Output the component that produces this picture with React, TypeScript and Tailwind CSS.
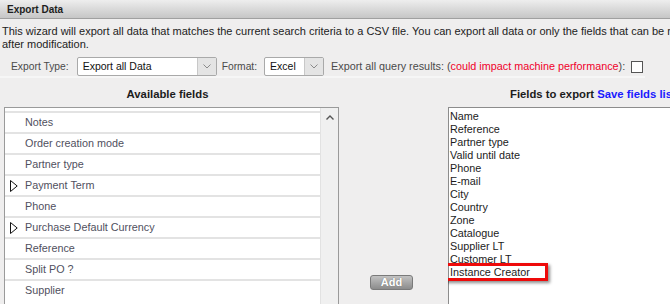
import React from "react";

function Chevron() {
  return (
    <svg width="8" height="5" viewBox="0 0 8 5">
      <path d="M0.5 0.5 L4 4 L7.5 0.5" fill="none" stroke="#8a8a8a" strokeWidth="1" />
    </svg>
  );
}

function Select({ value, width }: { value: string; width: string }) {
  return (
    <div className={`${width} h-[19px] flex border border-[#a9a9a9] rounded-[2px] bg-white overflow-hidden`}>
      <div className="flex-1 flex items-center pl-[5px] text-[10.5px] text-[#111]">{value}</div>
      <div className="w-[19px] flex items-center justify-center bg-[#e4e4e4] border-l border-[#c8c8c8]">
        <Chevron />
      </div>
    </div>
  );
}

function Triangle() {
  return (
    <svg width="8" height="12" viewBox="0 0 8 12">
      <polygon points="0.5,0.5 7.2,6 0.5,11.5" fill="white" stroke="#111" strokeWidth="1" />
    </svg>
  );
}

const available: { label: string; arrow?: boolean }[] = [
  { label: "Notes" },
  { label: "Order creation mode" },
  { label: "Partner type" },
  { label: "Payment Term", arrow: true },
  { label: "Phone" },
  { label: "Purchase Default Currency", arrow: true },
  { label: "Reference" },
  { label: "Split PO ?" },
  { label: "Supplier" },
];

const exportFields = [
  "Name",
  "Reference",
  "Partner type",
  "Valid until date",
  "Phone",
  "E-mail",
  "City",
  "Country",
  "Zone",
  "Catalogue",
  "Supplier LT",
  "Customer LT",
  "Instance Creator",
];

export default function App() {
  return (
    <div className="w-[670px] h-[304px] overflow-hidden bg-[#efeeee] font-['Liberation_Sans',Arial,sans-serif]">
      <div className="h-[19px] flex items-center pl-[7px] bg-gradient-to-b from-[#eeeeee] to-[#c6c6c6] border-b border-[#a0a0a0] text-[10px] font-bold text-[#1e1e1e]">
        Export Data
      </div>
      <div className="mt-[6px] pl-[2px] text-[11px] leading-[13px] text-[#222] whitespace-nowrap overflow-hidden">
        <div>
          This wizard will export all data that matches the current search criteria to a CSV file. You can export all data or only the fields that can be reimported
        </div>
        <div>after modification.</div>
      </div>
      <div className="mt-[6px] w-[645px] h-[21px] border-b-2 border-[#f6f6f6] flex items-start pl-[11px] text-[10.3px] text-[#4a4a4a] whitespace-nowrap">
        <div className="h-[19px] flex items-center">Export Type:</div>
        <div className="ml-[8px]">
          <Select value="Export all Data" width="w-[140px]" />
        </div>
        <div className="ml-[5px] h-[19px] flex items-center">Format:</div>
        <div className="ml-[7px]">
          <Select value="Excel" width="w-[60px]" />
        </div>
        <div className="ml-[7px] h-[19px] flex items-center text-[10.8px]">
          Export all query results: (<span className="text-[#f0002a]">could impact machine performance</span>):
        </div>
        <div className="ml-[6px] h-[19px] flex items-center">
          <div className="w-[12px] h-[12px] bg-white border border-[#555]" />
        </div>
      </div>
      <div className="flex">
        <div className="ml-[4px] w-[335px] shrink-0">
          <div className="h-[29px] pt-[10px] pr-[8px] text-center text-[11.3px] leading-[13px] font-bold text-[#1c1c1c]">
            Available fields
          </div>
          <div className="h-[200px] flex border-l border-t border-r border-[#9a9a9a] bg-white">
            <div className="flex-1 pt-[3px]">
              {available.map((f) => (
                <div key={f.label} className="h-[21px] border-t-2 border-[#e3e3e3] flex items-center">
                  <div className="w-[20px] pl-[5px] flex items-center">{f.arrow ? <Triangle /> : null}</div>
                  <div className="text-[10.8px] text-[#50505e]">{f.label}</div>
                </div>
              ))}
            </div>
            <div className="w-[18px] bg-[#f0f0f0] border-l border-[#e2e2e2] flex justify-center pt-[7px]">
              <svg width="8" height="5" viewBox="0 0 8 5">
                <path d="M0.5 4.5 L4 1 L7.5 4.5" fill="none" stroke="#555" strokeWidth="1.4" />
              </svg>
            </div>
          </div>
        </div>
        <div className="w-[109px] shrink-0 pl-[31px] pt-[197px]">
          <div className="w-[43px] h-[15px] rounded-[3px] border border-[#7a7a7a] bg-gradient-to-b from-[#c2c2c2] to-[#8c8c8c] flex items-center justify-center text-[11px] font-bold text-white [text-shadow:0_0_1px_#666]">
            Add
          </div>
        </div>
        <div className="flex-1 min-w-0 overflow-hidden">
          <div className="h-[29px] pt-[10px] pl-[62px] text-[11.3px] leading-[13px] font-bold text-[#1c1c1c] whitespace-nowrap">
            Fields to export <span className="text-[#1a1aff]">Save fields list</span>
          </div>
          <div className="relative h-[200px] border-l border-t border-[#8c8c8c] bg-white pt-[2px] pl-[1px]">
            {exportFields.map((f) => (
              <div key={f} className="text-[10.8px] leading-[13px] text-[#1c1c1c]">
                {f}
              </div>
            ))}
            <div className="absolute left-[-5px] top-[155px] w-[104px] h-[18px] border-[3px] border-[#ee0a0a] shadow-[2px_2px_3px_rgba(0,0,0,0.45)]" />
          </div>
        </div>
      </div>
    </div>
  );
}
